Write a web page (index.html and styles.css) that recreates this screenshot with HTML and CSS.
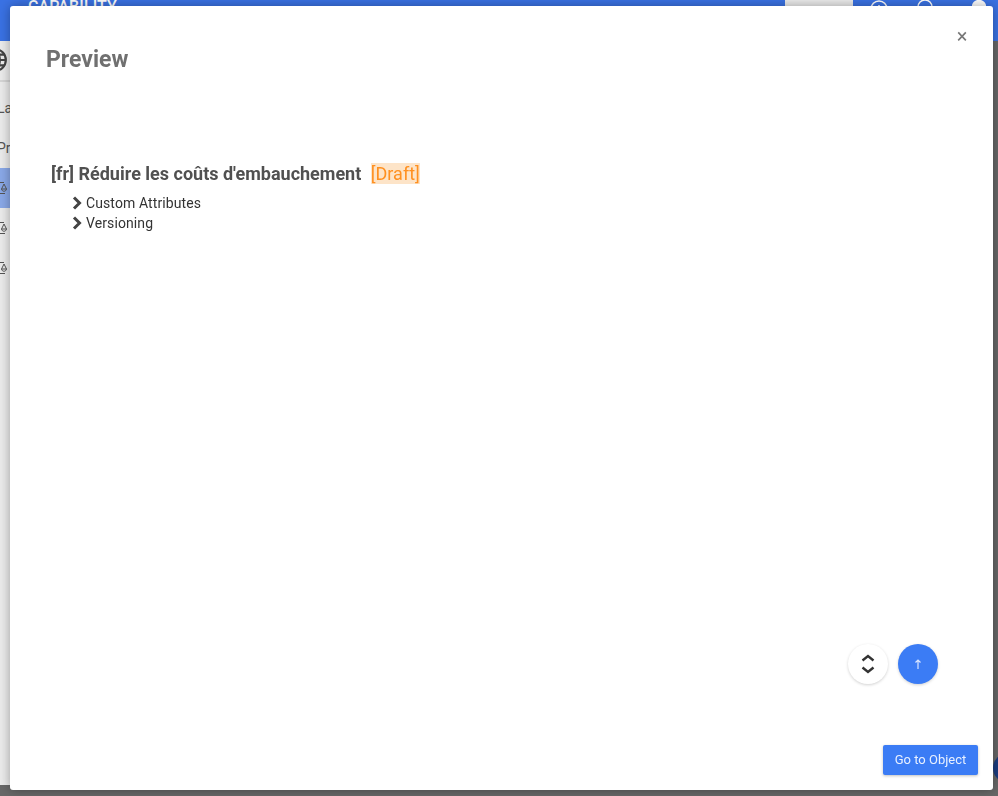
FILE: index.html
```html
<!DOCTYPE html>
<html lang="en">
<head>
    <meta charset="UTF-8">
    <title>Preview - Capability</title>
    <link rel="stylesheet" href="styles.css">
</head>
<body>
    <!-- page behind the dialog -->
    <div class="page">
        <header class="topbar">
            <span class="brand">CAPABILITY</span>
            <div class="topbar-right">
                <button class="new-btn">NEW</button>
                <svg class="top-icon" viewBox="0 0 20 20"><circle cx="10" cy="10" r="8"/><path d="M10 6v8"/></svg>
                <svg class="top-icon" viewBox="0 0 20 20"><circle cx="10" cy="8" r="7"/></svg>
                <svg class="top-icon avatar" viewBox="0 0 14 14"><circle cx="7" cy="7" r="6.500"/></svg>
            </div>
        </header>
        <aside class="sidebar">
            <div class="side-top">
                <svg class="globe" viewBox="0 0 24 24"><circle cx="12" cy="12" r="10"/><path d="M2 12h20M3.500 7h17M3.500 17h17M12 2c-6 6-6 14 0 20M12 2c6 6 6 14 0 20"/></svg>
            </div>
            <p class="side-label first">Labels</p>
            <p class="side-label last">Process</p>
            <div class="side-item active"><svg viewBox="0 0 8 14"><path d="M0 1.500h4M0 12.500h5M4 3L1.500 8h5zM1.500 8c.5 3 4.500 3 5 0"/></svg></div>
            <div class="side-item"><svg viewBox="0 0 8 14"><path d="M0 1.500h4M0 12.500h5M4 3L1.500 8h5zM1.500 8c.5 3 4.500 3 5 0"/></svg></div>
            <div class="side-item"><svg viewBox="0 0 8 14"><path d="M0 1.500h4M0 12.500h5M4 3L1.500 8h5zM1.500 8c.5 3 4.500 3 5 0"/></svg></div>
        </aside>
        <div class="help-bubble"></div>
    </div>

    <div class="modal">
        <div class="modal-head">
            <h2>Preview</h2>
            <button class="close-btn">&times;</button>
        </div>
        <div class="modal-body">
            <h3 class="node-title">[fr] Réduire les coûts d'embauchement <span class="draft">[Draft]</span></h3>
            <ul class="node-list">
                <li><svg class="chevron" viewBox="0 0 10 14"><path d="M2 1.500l5.500 5.500-5.500 5.500"/></svg>Custom Attributes</li>
                <li><svg class="chevron" viewBox="0 0 10 14"><path d="M2 1.500l5.500 5.500-5.500 5.500"/></svg>Versioning</li>
            </ul>
        </div>
        <div class="fab-group">
            <button class="fab fab-white">
                <svg viewBox="0 0 16 24"><path d="M2.500 8.500l5.500-4.500 5.500 4.500M2.500 15.500l5.500 4.500 5.500-4.500"/></svg>
            </button>
            <button class="fab fab-blue">
                <svg viewBox="0 0 10 12"><path d="M5 11V2M2.500 4.500L5 2l2.500 2.500"/></svg>
            </button>
        </div>
        <div class="modal-foot">
            <button class="go-btn">Go to Object</button>
        </div>
    </div>
</body>
</html>
```

FILE: styles.css
```css
* {
    margin: 0;
    padding: 0;
    box-sizing: border-box;
}

html,
body {
    height: 100%;
    overflow: hidden;
}

body {
    font-family: 'Roboto', sans-serif;
    background: #686868;
    color: #333333;
}

button {
    font-family: inherit;
    border: none;
    cursor: pointer;
}

/* Page behind the dialog */
.page {
    height: 785px;
    display: flex;
    flex-direction: column;
}

.topbar {
    height: 41px;
    flex: none;
    background: #3a72e4;
    display: flex;
    align-items: flex-start;
    justify-content: space-between;
    padding: 0 12px 0 28px;
}

.brand {
    color: #ffffff;
    font-size: 16px;
    font-weight: 500;
    line-height: 14px;
    letter-spacing: 0.1px;
}

.topbar-right {
    display: flex;
    align-items: flex-start;
}

.new-btn {
    width: 68px;
    height: 24px;
    background: #ececec;
    color: #a5a5a5;
    font-size: 14px;
    letter-spacing: 1px;
    margin-right: 16px;
    display: block;
}

.top-icon {
    width: 20px;
    height: 20px;
    fill: none;
    stroke: #ffffff;
    stroke-width: 1.5;
    margin-right: 26px;
    margin-top: -1px;
}

.avatar {
    width: 14px;
    height: 14px;
    fill: #ffffff;
    margin: 0 0 0 11px;
}

.sidebar {
    width: 40px;
    flex: 1;
    background: #ececec;
}

.side-top {
    height: 41px;
    border-bottom: 2px solid #d6d6d6;
    padding: 6px 0 0 0;
    overflow: hidden;
}

.globe {
    width: 26px;
    height: 26px;
    margin-left: -18px;
    fill: none;
    stroke: #444444;
    stroke-width: 2;
    display: block;
}

.side-label {
    font-size: 14px;
    color: #555555;
    margin: 0 0 24px -3px;
    line-height: 16px;
    white-space: nowrap;
}

.side-label.first {
    margin-top: 18px;
}

.side-label.last {
    margin-bottom: 12px;
}

.side-item {
    height: 40px;
    display: flex;
    align-items: center;
}

.side-item svg {
    width: 8px;
    height: 14px;
    fill: none;
    stroke: #555555;
    stroke-width: 1;
}

.side-item.active {
    background: #8aa9e8;
}

.help-bubble {
    position: fixed;
    left: 993px;
    top: 753px;
    width: 30px;
    height: 30px;
    border-radius: 50%;
    background: #1c3d80;
}

/* Dialog */
.modal {
    position: fixed;
    left: 10px;
    top: 6px;
    width: 983px;
    height: 784px;
    background: #ffffff;
    border-radius: 3px;
    box-shadow: 0 0 12px rgba(0, 0, 0, 0.35);
    display: flex;
    flex-direction: column;
}

.modal-head {
    display: flex;
    justify-content: space-between;
    align-items: flex-start;
    padding: 40px 24px 0 36px;
}

.modal-head h2 {
    font-size: 23px;
    font-weight: 700;
    line-height: 27px;
    color: #707070;
}

.close-btn {
    background: none;
    color: #777777;
    font-size: 20px;
    line-height: 20px;
    width: 14px;
    margin-top: -20px;
}

.modal-body {
    flex: 1;
    padding: 89px 0 0 41px;
}

.node-title {
    font-size: 18px;
    font-weight: 700;
    line-height: 24px;
    color: #505050;
    margin-bottom: 7px;
}

.draft {
    font-weight: 400;
    color: #ff9020;
    background: #fde4c8;
    margin-left: 5px;
}

.node-list {
    list-style: none;
    padding-left: 21px;
    font-size: 14px;
    line-height: 20px;
    letter-spacing: 0.1px;
    color: #333333;
}

.node-list li {
    display: flex;
    align-items: center;
}

.chevron {
    width: 10px;
    height: 14px;
    margin-right: 4px;
    fill: none;
    stroke: #444444;
    stroke-width: 3;
}

.fab-group {
    position: absolute;
    left: 838px;
    top: 638px;
    display: flex;
    gap: 10px;
}

.fab {
    width: 40px;
    height: 40px;
    border-radius: 50%;
    display: flex;
    align-items: center;
    justify-content: center;
    box-shadow: 0 1px 3px rgba(0, 0, 0, 0.18);
}

.fab-white {
    background: #ffffff;
}

.fab-white svg {
    width: 16px;
    height: 24px;
    fill: none;
    stroke: #333333;
    stroke-width: 2.4;
}

.fab-blue {
    background: #3b7cf5;
}

.fab-blue svg {
    width: 10px;
    height: 12px;
    fill: none;
    stroke: #d8e5ff;
    stroke-width: 1.2;
}

.modal-foot {
    display: flex;
    justify-content: flex-end;
    padding: 0 15px 15px 0;
}

.go-btn {
    width: 95px;
    height: 30px;
    padding-bottom: 2px;
    background: #3b7cf5;
    color: #e8f0ff;
    font-size: 13px;
    border-radius: 2px;
    box-shadow: 0 1px 3px rgba(0, 0, 0, 0.25);
}
```
